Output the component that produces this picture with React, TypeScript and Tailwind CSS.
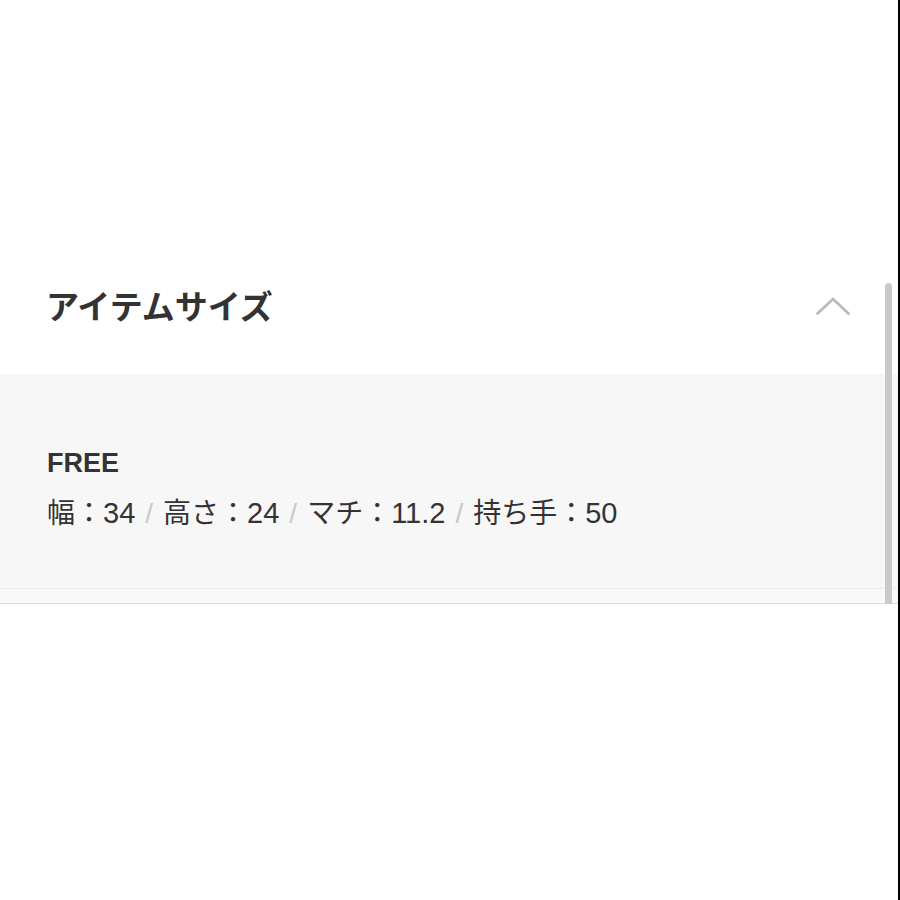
import React from "react";

const font = { fontFamily: '"Liberation Sans", "Noto Sans CJK JP", sans-serif' };

function Slash() {
  return <span className="text-[#c8c8c8] mx-[10px]">/</span>;
}

function Num({ children }: { children: React.ReactNode }) {
  return <span className="text-[29px]">{children}</span>;
}

export default function App() {
  return (
    <div
      className="relative w-[900px] h-[900px] bg-white flex"
      style={font}
    >
      <div className="w-[898px] flex flex-col">
        <div className="h-[240px]" />
        <div className="h-[134px] flex items-center justify-between pl-[46px] pr-[48px] pb-[4px]">
          <h2
            className="text-[33px] font-bold text-[#333333] leading-none"
            style={{ fontFamily: '"Noto Sans CJK JP", sans-serif' }}
          >
            アイテムサイズ
          </h2>
          <svg width="34" height="20" viewBox="0 0 34 20" fill="none" className="mt-[4px]">
            <path
              d="M1.5 16.5 L17 2 L32.5 16.5"
              stroke="#bababa"
              strokeWidth="2.8"
              strokeLinecap="round"
              strokeLinejoin="round"
            />
          </svg>
        </div>
        <div className="bg-[#f7f7f7] h-[214px] pl-[47px] pt-[71px]">
          <div className="text-[27px] leading-[36px] font-bold text-[#333333]">
            FREE
          </div>
          <div className="mt-[14px] text-[28px] leading-[36px] text-[#333333] whitespace-nowrap">
            幅：<Num>34</Num>
            <Slash />
            高さ：<Num>24</Num>
            <Slash />
            マチ：<Num>11.2</Num>
            <Slash />
            持ち手：<Num>50</Num>
          </div>
        </div>
        <div className="h-[16px] bg-[#f9f9f9] border-t border-[#ececec] border-b border-b-[#dcdcdc]" />
      </div>
      <div className="w-[2px] h-full bg-black" />
      <div className="absolute left-[885px] top-[283px] w-[7px] h-[321px] rounded-t-full bg-[#c9c9c9]" />
    </div>
  );
}
